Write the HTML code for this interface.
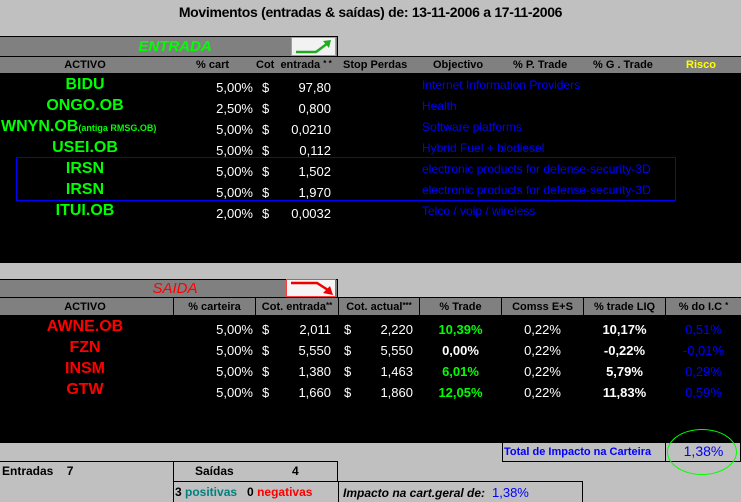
<!DOCTYPE html>
<html><head><meta charset="utf-8"><style>
*{margin:0;padding:0;box-sizing:border-box}
body{width:741px;height:502px;background:#c0c0c0;font-family:"Liberation Sans",Arial,sans-serif;position:relative;overflow:hidden}
.a{position:absolute;white-space:nowrap}
.g{color:#00ff00;font-weight:bold;font-size:16px}
.r{color:#ff0000;font-weight:bold;font-size:16px}
.w{color:#fff;font-size:13px}
.b{color:#0000ff;font-size:12px}
.h{font-size:11px;font-weight:bold;color:#000}
.c{text-align:center}
.rt{text-align:right}
</style></head><body>
<div class="a c" style="left:0;width:741px;top:4px;font-size:14px;font-weight:bold;letter-spacing:-0.3px">Movimentos (entradas &amp; saídas) de: 13-11-2006 a 17-11-2006</div>

<!-- ENTRADA -->
<div class="a" style="left:0;top:36px;width:338px;height:21px;background:#808080;border-top:1px solid #000;border-right:1px solid #000"></div>
<div class="a c" style="left:100px;width:150px;top:38px;color:#00ff00;font-style:italic;font-weight:bold;font-size:15px">ENTRADA</div>
<div class="a" style="left:291px;top:37px;width:45px;height:19px;background:#f2f2f2;border:1px solid #a0a0a0">
<svg width="43" height="17"><path d="M4 14 H24 L36 5" stroke="#22aa22" stroke-width="2.5" fill="none"/><path d="M31 3 L39 2 L37 10 Z" fill="#22aa22"/></svg></div>
<div class="a" style="left:0;top:56px;width:741px;height:17px;background:#808080;border-top:1px solid #000"></div>
<div class="a h c" style="left:40px;width:90px;top:59px">ACTIVO</div>
<div class="a h" style="left:196px;top:59px">% cart</div>
<div class="a h" style="left:256px;top:59px">Cot&nbsp; entrada <span style="font-size:8px;vertical-align:top">* *</span></div>
<div class="a h" style="left:343px;top:59px">Stop Perdas</div>
<div class="a h" style="left:433px;top:59px">Objectivo</div>
<div class="a h" style="left:513px;top:59px">% P. Trade</div>
<div class="a h" style="left:593px;top:59px">% G . Trade</div>
<div class="a h" style="left:686px;top:59px;color:#ffff00">Risco</div>
<div class="a" style="left:0;top:73px;width:741px;height:190px;background:#000"></div>
<div class="a" style="left:16px;top:157px;width:660px;height:44px;border:1px solid #0000ff"></div>

<div class="a g c" style="left:40px;width:90px;top:76px">BIDU</div>
<div class="a g c" style="left:20px;width:130px;top:97px">ONGO.OB</div>
<div class="a g" style="left:1px;top:118px">WNYN.OB<span style="font-size:9px">(antiga RMSG.OB)</span></div>
<div class="a g c" style="left:20px;width:130px;top:139px">USEI.OB</div>
<div class="a g c" style="left:40px;width:90px;top:160px">IRSN</div>
<div class="a g c" style="left:40px;width:90px;top:181px">IRSN</div>
<div class="a g c" style="left:20px;width:130px;top:202px">ITUI.OB</div>

<div class="a w rt" style="left:190px;width:63px;top:77px;line-height:21px">5,00%<br>2,50%<br>5,00%<br>5,00%<br>5,00%<br>5,00%<br>2,00%</div>
<div class="a w" style="left:262px;top:77px;line-height:21px">$<br>$<br>$<br>$<br>$<br>$<br>$</div>
<div class="a w rt" style="left:270px;width:61px;top:77px;line-height:21px">97,80<br>0,800<br>0,0210<br>0,112<br>1,502<br>1,970<br>0,0032</div>
<div class="a b" style="left:422px;top:75px;line-height:21px">Internet Information Providers<br>Health<br>Software platforms<br>Hybrid Fuel + biodiesel<br>electronic products for defense-security-3D<br>electronic products for defense-security-3D<br>Telco / voip / wireless</div>

<!-- SAIDA -->
<div class="a" style="left:0;top:279px;width:338px;height:19px;background:#808080;border-top:1px solid #000;border-right:1px solid #000"></div>
<div class="a c" style="left:100px;width:150px;top:280px;color:#ff0000;font-style:italic;font-size:15px">SAIDA</div>
<div class="a" style="left:286px;top:279px;width:50px;height:18px;background:#f6f6f6;border:1px solid #ff4040">
<svg width="48" height="16"><path d="M4 3 H30 L41 10" stroke="#ee0000" stroke-width="2.5" fill="none"/><path d="M36 13 L46 15 L43 6 Z" fill="#ee0000"/></svg></div>
<div class="a" style="left:0;top:297px;width:741px;height:18px;background:#808080;border-top:1px solid #000"></div>
<div class="a" style="left:173px;top:297px;width:1px;height:18px;background:#000"></div>
<div class="a" style="left:255px;top:297px;width:1px;height:18px;background:#000"></div>
<div class="a" style="left:338px;top:297px;width:1px;height:18px;background:#000"></div>
<div class="a" style="left:419px;top:297px;width:1px;height:18px;background:#000"></div>
<div class="a" style="left:501px;top:297px;width:1px;height:18px;background:#000"></div>
<div class="a" style="left:583px;top:297px;width:1px;height:18px;background:#000"></div>
<div class="a" style="left:665px;top:297px;width:1px;height:18px;background:#000"></div>
<div class="a h c" style="left:40px;width:90px;top:301px">ACTIVO</div>
<div class="a h c" style="left:174px;width:81px;top:301px">% carteira</div>
<div class="a h c" style="left:256px;width:82px;top:301px">Cot. entrada<span style="font-size:8px;vertical-align:top">**</span></div>
<div class="a h c" style="left:339px;width:80px;top:301px">Cot. actual<span style="font-size:8px;vertical-align:top">***</span></div>
<div class="a h c" style="left:420px;width:81px;top:301px">% Trade</div>
<div class="a h c" style="left:502px;width:81px;top:301px">Comss E+S</div>
<div class="a h c" style="left:584px;width:81px;top:301px">% trade LIQ</div>
<div class="a h c" style="left:666px;width:75px;top:301px">% do I.C <span style="font-size:8px;vertical-align:top">*</span></div>
<div class="a" style="left:0;top:315px;width:741px;height:128px;background:#000"></div>

<div class="a r c" style="left:20px;width:130px;top:318px">AWNE.OB</div>
<div class="a r c" style="left:40px;width:90px;top:339px">FZN</div>
<div class="a r c" style="left:40px;width:90px;top:360px">INSM</div>
<div class="a r c" style="left:40px;width:90px;top:381px">GTW</div>
<div class="a w rt" style="left:190px;width:63px;top:319px;line-height:21px">5,00%<br>5,00%<br>5,00%<br>5,00%</div>
<div class="a w" style="left:262px;top:319px;line-height:21px">$<br>$<br>$<br>$</div>
<div class="a w rt" style="left:270px;width:61px;top:319px;line-height:21px">2,011<br>5,550<br>1,380<br>1,660</div>
<div class="a w" style="left:344px;top:319px;line-height:21px">$<br>$<br>$<br>$</div>
<div class="a w rt" style="left:350px;width:63px;top:319px;line-height:21px">2,220<br>5,550<br>1,463<br>1,860</div>
<div class="a c" style="left:420px;width:81px;top:319px;line-height:21px;font-size:13px;font-weight:bold;color:#00ff00">10,39%<br><span style="color:#fff">0,00%</span><br>6,01%<br>12,05%</div>
<div class="a w c" style="left:502px;width:81px;top:319px;line-height:21px">0,22%<br>0,22%<br>0,22%<br>0,22%</div>
<div class="a w c" style="left:584px;width:81px;top:319px;line-height:21px;font-weight:bold">10,17%<br>-0,22%<br>5,79%<br>11,83%</div>
<div class="a c" style="left:666px;width:75px;top:319px;line-height:21px;font-size:13px;color:#0000ff">0,51%<br>-0,01%<br>0,29%<br>0,59%</div>

<!-- totals -->
<div class="a" style="left:502px;top:442px;width:239px;height:20px;border:1px solid #000;border-top:none"></div>
<div class="a" style="left:665px;top:442px;width:1px;height:20px;background:#000"></div>
<div class="a" style="left:504px;top:446px;font-size:11px;font-weight:bold;color:#0000ff">Total de Impacto na Carteira</div>
<div class="a c" style="left:666px;width:75px;top:443px;font-size:14px;color:#0000ff">1,38%</div>
<div class="a" style="left:667px;top:429px;width:70px;height:46px;border:1px solid #00ff00;border-radius:50%"></div>

<div class="a" style="left:0;top:461px;width:338px;height:20px;border-top:1px solid #000;border-right:1px solid #000"></div>
<div class="a" style="left:173px;top:461px;width:1px;height:41px;background:#000"></div>
<div class="a" style="left:173px;top:481px;width:410px;height:21px;border-top:1px solid #000;border-right:1px solid #000"></div>
<div class="a" style="left:338px;top:481px;width:1px;height:21px;background:#000"></div>
<div class="a" style="left:2px;top:464px;font-size:12px;font-weight:bold">Entradas &nbsp;&nbsp; 7</div>
<div class="a" style="left:195px;top:464px;font-size:12px;font-weight:bold">Saídas</div>
<div class="a" style="left:292px;top:464px;font-size:12px;font-weight:bold">4</div>
<div class="a" style="left:175px;top:485px;font-size:12px;font-weight:bold">3 <span style="color:#008080">positivas</span> &nbsp; 0 <span style="color:#ff0000">negativas</span></div>
<div class="a" style="left:343px;top:485px;font-size:12px;font-weight:bold;font-style:italic">Impacto na cart.geral de: <span style="font-style:normal;color:#0000ff;font-size:13px;font-weight:normal">&nbsp;1,38%</span></div>
</body></html>
